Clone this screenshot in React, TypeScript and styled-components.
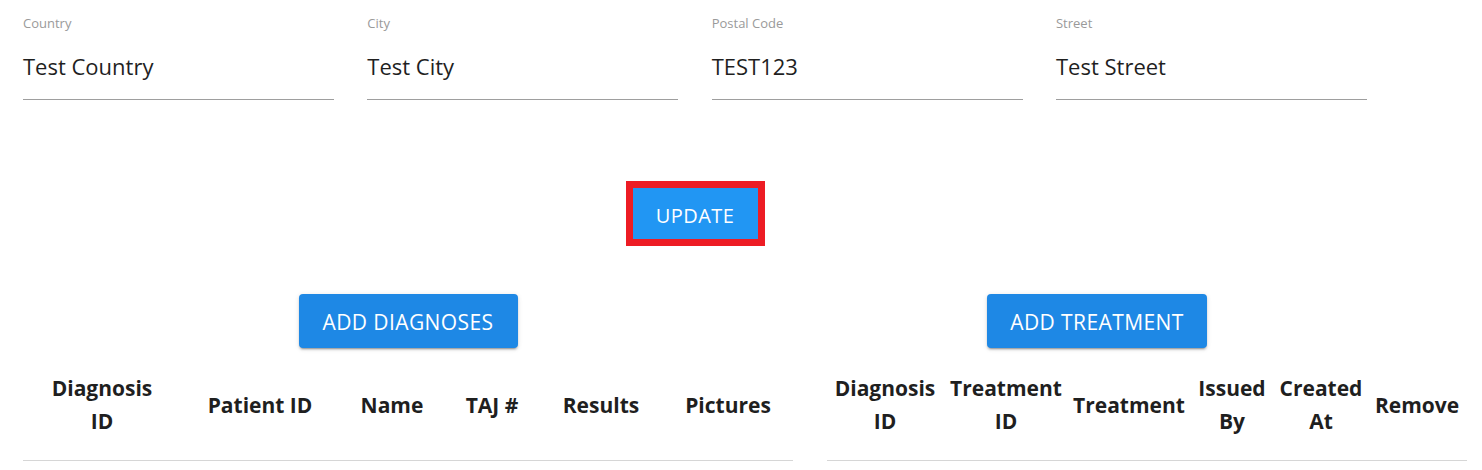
import React from "react";
import styled, { createGlobalStyle } from "styled-components";

const GlobalStyle = createGlobalStyle`
  html, body { margin: 0; padding: 0; background: #ffffff; }
  body { font-family: "Open Sans", "Noto Sans", Arial, sans-serif; color: #222; }
`;

const Page = styled.div`
  width: 1344px;
  padding-left: 23px;
  display: flex;
  flex-direction: column;
`;

const FieldsRow = styled.div`
  display: grid;
  grid-template-columns: repeat(4, 311px);
  column-gap: 33.33px;
  padding-top: 14px;
`;

const Field = styled.div`
  display: flex;
  flex-direction: column;
`;

const Label = styled.span`
  font-size: 13px;
  line-height: 18px;
  height: 18px;
  color: #9a9a9a;
`;

const Value = styled.div`
  margin-top: 19px;
  font-size: 22px;
  line-height: 30px;
  height: 30px;
  padding-bottom: 18px;
  color: #1f1f1f;
  border-bottom: 1px solid #9e9e9e;
`;

const UpdateRow = styled.div`
  display: flex;
  justify-content: center;
  margin-top: 88px;
`;

const UpdateButton = styled.button`
  width: 125px;
  height: 51px;
  border: none;
  border-radius: 0;
  background: #2196f3;
  color: #ffffff;
  font-family: inherit;
  font-size: 20px;
  letter-spacing: 0.4px;
  outline: 7px solid #ed1c24;
  padding: 3px 0 0;
`;

const BottomRow = styled.div`
  display: grid;
  grid-template-columns: 770px 640px;
  column-gap: 34px;
  margin-top: 55px;
  align-items: start;
`;

const Section = styled.div`
  display: flex;
  flex-direction: column;
`;

const ButtonBar = styled.div<{ $width: number }>`
  width: ${(p) => p.$width}px;
  display: flex;
  justify-content: center;
`;

const ActionButton = styled.button<{ $width: number }>`
  width: ${(p) => p.$width}px;
  height: 54px;
  border: none;
  border-radius: 4px;
  background: #1e88e5;
  color: #ffffff;
  font-family: inherit;
  font-size: 21px;
  letter-spacing: 0.4px;
  padding: 2px 0 0;
  box-shadow: 0 3px 1px -2px rgba(0, 0, 0, 0.2), 0 2px 2px 0 rgba(0, 0, 0, 0.14),
    0 1px 5px 0 rgba(0, 0, 0, 0.12);
`;

const Table = styled.table`
  margin-top: 8px;
  border-collapse: collapse;
  table-layout: fixed;
  width: 100%;
`;

const HeadCell = styled.th<{ $width: number }>`
  width: ${(p) => p.$width}px;
  padding: 16px 0 22px;
  font-size: 21px;
  line-height: 33px;
  font-weight: 700;
  color: #1f1f1f;
  text-align: center;
  vertical-align: middle;
  border-bottom: 1px solid #d6d6d6;
  white-space: nowrap;
`;

type Col = { lines: string[]; width: number };

const leftCols: Col[] = [
  { lines: ["Diagnosis", "ID"], width: 158 },
  { lines: ["Patient ID"], width: 158 },
  { lines: ["Name"], width: 106 },
  { lines: ["TAJ #"], width: 94 },
  { lines: ["Results"], width: 124 },
  { lines: ["Pictures"], width: 130 },
];

const rightCols: Col[] = [
  { lines: ["Diagnosis", "ID"], width: 116 },
  { lines: ["Treatment", "ID"], width: 126 },
  { lines: ["Treatment"], width: 120 },
  { lines: ["Issued", "By"], width: 86 },
  { lines: ["Created", "At"], width: 92 },
  { lines: ["Remove"], width: 100 },
];

const fields = [
  { label: "Country", value: "Test Country" },
  { label: "City", value: "Test City" },
  { label: "Postal Code", value: "TEST123" },
  { label: "Street", value: "Test Street" },
];

function HeaderTable({ cols }: { cols: Col[] }) {
  return (
    <Table>
      <thead>
        <tr>
          {cols.map((c, i) => (
            <HeadCell key={i} $width={c.width}>
              {c.lines.map((l, j) => (
                <React.Fragment key={j}>
                  {j > 0 && <br />}
                  {l}
                </React.Fragment>
              ))}
            </HeadCell>
          ))}
        </tr>
      </thead>
    </Table>
  );
}

export default function App() {
  return (
    <>
      <GlobalStyle />
      <Page>
        <FieldsRow>
          {fields.map((f) => (
            <Field key={f.label}>
              <Label>{f.label}</Label>
              <Value>{f.value}</Value>
            </Field>
          ))}
        </FieldsRow>
        <UpdateRow>
          <UpdateButton>UPDATE</UpdateButton>
        </UpdateRow>
        <BottomRow>
          <Section>
            <ButtonBar $width={770}>
              <ActionButton $width={219}>ADD DIAGNOSES</ActionButton>
            </ButtonBar>
            <HeaderTable cols={leftCols} />
          </Section>
          <Section>
            <ButtonBar $width={540}>
              <ActionButton $width={220}>ADD TREATMENT</ActionButton>
            </ButtonBar>
            <HeaderTable cols={rightCols} />
          </Section>
        </BottomRow>
      </Page>
    </>
  );
}
